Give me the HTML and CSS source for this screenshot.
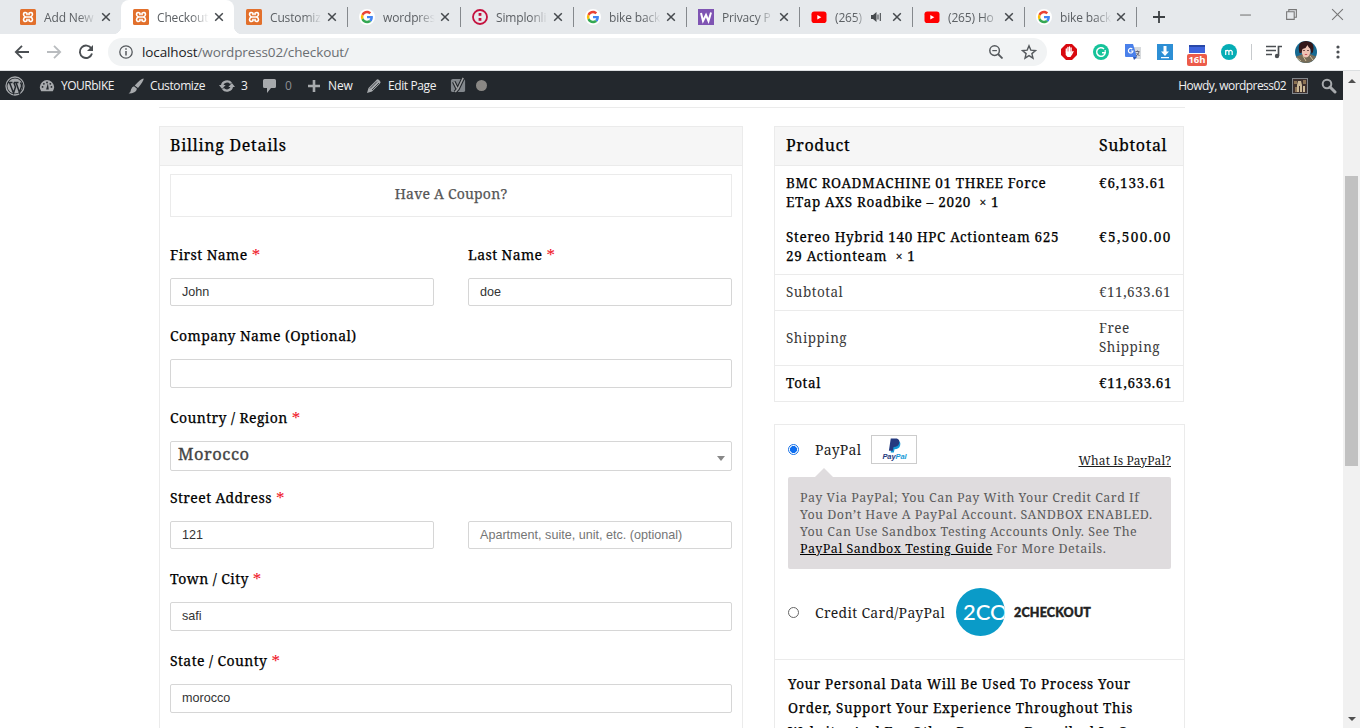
FILE: index.html
```
<!DOCTYPE html>
<html lang="en">
<head>
<meta charset="utf-8">
<title>Checkout</title>
<link rel="stylesheet" href="styles.css">
</head>
<body>
<svg class="defs" width="0" height="0">
  <symbol id="xampp" viewBox="0 0 16 16"><rect width="16" height="16" rx="1.5" fill="#e2702c"/><path d="M7 4.300C5.500 3 3.500 3.500 3.500 5.300q0 1.900 2 2.700-2 .8-2 2.700c0 1.800 2 2.300 3.500 1M9 4.300c1.500-1.300 3.500-.8 3.500 1q0 1.900-2 2.700 2 .8 2 2.700c0 1.800-2 2.300-3.500 1M5.500 8h5M7 3.800v2.500M9 3.800v2.500M7 9.700v2.500M9 9.700v2.500" fill="none" stroke="#fff" stroke-width="1.600"/></symbol>
  <symbol id="google" viewBox="0 0 48 48"><circle cx="24" cy="24" r="24" fill="#fff"/><g transform="translate(5.500 5.500) scale(.77)"><path fill="#ea4335" d="M24 9.500c3.540 0 6.710 1.220 9.210 3.600l6.850-6.850C35.900 2.380 30.470 0 24 0 14.620 0 6.510 5.380 2.560 13.220l7.980 6.190C12.430 13.720 17.740 9.500 24 9.500z"/><path fill="#4285f4" d="M46.980 24.550c0-1.570-.15-3.090-.38-4.550H24v9.020h12.940c-.58 2.960-2.260 5.480-4.780 7.180l7.730 6c4.510-4.180 7.090-10.360 7.090-17.650z"/><path fill="#fbbc05" d="M10.530 28.590a14.500 14.500 0 0 1 0-9.180l-7.980-6.190a24 24 0 0 0 0 21.560z"/><path fill="#34a853" d="M24 48c6.480 0 11.930-2.130 15.890-5.810l-7.730-6c-2.150 1.450-4.920 2.300-8.160 2.300-6.260 0-11.570-4.220-13.470-9.910l-7.980 6.190C6.510 42.620 14.620 48 24 48z"/></g></symbol>
  <symbol id="youtube" viewBox="0 0 16 16"><rect x=".5" y="2.500" width="15" height="11.500" rx="2.800" fill="#f00"/><path d="M6.300 6v4.600l4-2.300z" fill="#fff"/></symbol>
  <symbol id="close" viewBox="0 0 10 10"><path d="M1.200 1.200l7.600 7.600M8.800 1.200L1.200 8.800" stroke="#45494d" stroke-width="1.500"/></symbol>
</svg>

<header class="browser">
  <div class="tabs">
    <div class="tab"><svg class="fav"><use href="#xampp"/></svg><span class="title">Add New</span><svg class="x"><use href="#close"/></svg></div>
    <div class="tab active"><svg class="fav"><use href="#xampp"/></svg><span class="title">Checkout</span><svg class="x"><use href="#close"/></svg></div>
    <div class="tab sep"><svg class="fav"><use href="#xampp"/></svg><span class="title">Customiz</span><svg class="x"><use href="#close"/></svg></div>
    <div class="tab sep"><svg class="fav"><use href="#google"/></svg><span class="title">wordpres</span><svg class="x"><use href="#close"/></svg></div>
    <div class="tab sep"><svg class="fav" viewBox="0 0 16 16"><circle cx="8" cy="8" r="7" fill="none" stroke="#c5123f" stroke-width="1.800"/><rect x="6.600" y="4" width="2.800" height="2.800" fill="#c5123f"/><rect x="6.600" y="9" width="2.800" height="2.800" fill="#c5123f"/></svg><span class="title">Simplonli</span><svg class="x"><use href="#close"/></svg></div>
    <div class="tab sep"><svg class="fav"><use href="#google"/></svg><span class="title">bike back</span><svg class="x"><use href="#close"/></svg></div>
    <div class="tab sep"><svg class="fav" viewBox="0 0 16 16"><rect width="16" height="16" fill="#7f54b3"/><path d="M3 4l2 8 3-6 2.500 6L13 3.500" fill="none" stroke="#fff" stroke-width="2"/></svg><span class="title">Privacy P</span><svg class="x"><use href="#close"/></svg></div>
    <div class="tab sep"><svg class="fav"><use href="#youtube"/></svg><span class="title audio">(265)</span><svg class="sound" viewBox="0 0 12 12"><path d="M1 4h2l3.500-3v10L3 8H1z" fill="#45494d"/><path d="M8 3.500v5M10.300 2v8" stroke="#45494d" stroke-width="1.100"/></svg><svg class="x"><use href="#close"/></svg></div>
    <div class="tab sep narrow"><svg class="fav"><use href="#youtube"/></svg><span class="title">(265) Ho</span><svg class="x"><use href="#close"/></svg></div>
    <div class="tab sep narrow"><svg class="fav"><use href="#google"/></svg><span class="title">bike back</span><svg class="x"><use href="#close"/></svg></div>
    <svg class="plus" viewBox="0 0 12 12"><path d="M6 0v12M0 6h12" stroke="#3c4043" stroke-width="1.800"/></svg>
    <div class="window-buttons">
      <svg viewBox="0 0 12 12"><path d="M1 6.500h10" stroke="#777"/></svg>
      <svg viewBox="0 0 12 12"><path d="M1.500 3.500h7v7h-7zM3.500 3.500v-2h7v7h-2" fill="none" stroke="#777"/></svg>
      <svg viewBox="0 0 12 12"><path d="M1 1l10 10M11 1L1 11" stroke="#777"/></svg>
    </div>
  </div>
  <div class="toolbar">
    <svg class="nav" viewBox="0 0 16 16"><path d="M15 8H2M8 1.800L1.800 8 8 14.200" fill="none" stroke="#4b4f53" stroke-width="1.800"/></svg>
    <svg class="nav" viewBox="0 0 16 16"><path d="M1 8h13M8 1.800L14.200 8 8 14.200" fill="none" stroke="#b9bcbf" stroke-width="1.800"/></svg>
    <svg class="nav" viewBox="0 0 16 16"><path d="M13.400 4.600A6.200 6.200 0 1 0 14 9.500" fill="none" stroke="#4b4f53" stroke-width="1.900"/><path d="M15 1v6H9z" fill="#4b4f53"/></svg>
    <div class="omnibox">
      <svg class="info" viewBox="0 0 14 14"><circle cx="7" cy="7" r="6.200" fill="none" stroke="#55595d" stroke-width="1.300"/><path d="M7 6v4.500M7 3.300v1.500" stroke="#55595d" stroke-width="1.500"/></svg>
      <span class="url"><b>localhost</b>/wordpress02/checkout/</span>
      <svg class="mag" viewBox="0 0 14 14"><circle cx="5.600" cy="5.600" r="4.800" fill="none" stroke="#55595d" stroke-width="1.500"/><path d="M9 9l4.500 4.500" stroke="#55595d" stroke-width="1.800"/><path d="M3.300 5.600h4.600" stroke="#55595d" stroke-width="1.200"/></svg>
      <svg class="star" viewBox="0 0 16 16"><path d="M8 1.800l1.800 4.300 4.700.4-3.600 3.100 1.100 4.600L8 11.700l-4 2.500 1.100-4.600L1.500 6.500l4.700-.4z" fill="none" stroke="#55595d" stroke-width="1.400"/></svg>
    </div>
    <div class="extensions">
      <svg viewBox="0 0 16 16"><path d="M5 0h6l5 5v6l-5 5H5l-5-5V5z" fill="#d9090f"/><path d="M5.300 8V5M6.900 8V3.500M8.500 8V3M10.100 8V4M10.500 10.500l1.500-3" fill="none" stroke="#fff" stroke-width="1.300" stroke-linecap="round"/><path d="M4.700 7.500h6v3.500L9.500 13h-3l-1.800-2z" fill="#fff"/></svg>
      <svg viewBox="0 0 16 16"><circle cx="8" cy="8" r="8" fill="#15c39a"/><path d="M11 5a4.300 4.300 0 1 0 1.200 3.800H9" fill="none" stroke="#fff" stroke-width="1.500"/><path d="M12.200 6v3" stroke="#fff" stroke-width="1.200"/></svg>
      <svg viewBox="0 0 16 16"><path d="M6 3h10v12H9z" fill="#d7dadd"/><path d="M0 0h8l4 13H1q-1 0-1-1z" fill="#4a80ea"/><path d="M8 13h4l-3 3z" fill="#2d56b5"/><path d="M7.300 5A2.300 2.300 0 1 0 8 7H5.800" fill="none" stroke="#fff" stroke-width="1.200"/><path d="M10.500 7.500h4M12.500 6.500v1M14 8q-1 3-3 4M11.500 9l3 3" fill="none" stroke="#667" stroke-width="1"/></svg>
      <svg viewBox="0 0 16 16"><rect width="16" height="16" fill="#2d8fd5"/><path d="M6.500 2h3v5.500H12L8 12 4 7.500h2.500zM4 13h8v1.200H4z" fill="#fff"/></svg>
      <div class="timer"><i></i><span>16h</span></div>
      <svg viewBox="0 0 16 16"><circle cx="8" cy="8" r="8" fill="#05adb5"/><path d="M4.700 11V6M4.700 7.500q1.600-2.200 3.200 0V11M7.900 7.500q1.700-2.200 3.300 0V11" fill="none" stroke="#fff" stroke-width="1.200"/></svg>
      <i class="divider"></i>
      <svg viewBox="0 0 16 16"><path d="M0 2.500h10M0 6.500h10M0 10.500h6M12.500 12V2.500H16" fill="none" stroke="#4b4f53" stroke-width="1.700"/><circle cx="11" cy="12" r="2.200" fill="#4b4f53"/></svg>
      <svg class="avatar" viewBox="0 0 22 22"><clipPath id="face"><circle cx="11" cy="11" r="11"/></clipPath><g clip-path="url(#face)"><rect width="22" height="22" fill="#176a92"/><path d="M0 16l8-3h7l7 3v6H0z" fill="#776c58"/><path d="M2 17l4 3M8 15l3 5M15 15l3 4" stroke="#d4c29c"/><ellipse cx="11" cy="10" rx="4.500" ry="6.500" fill="#efc3b4"/><path d="M4.500 12Q1.500 0 11 0t7 11l-1.500 2-1-5-2-2-1-2-2 3-3 1-1 4z" fill="#33171a"/><path d="M8 9.500h2M12 9.500h2" stroke="#533" stroke-width=".8"/><path d="M9.800 13.500h2.400" stroke="#c54d58" stroke-width=".9"/></g></svg>
      <svg class="dots" viewBox="0 0 4 16"><circle cx="2" cy="3" r="1.600" fill="#4b4f53"/><circle cx="2" cy="8" r="1.600" fill="#4b4f53"/><circle cx="2" cy="13" r="1.600" fill="#4b4f53"/></svg>
    </div>
  </div>
</header>

<div class="viewport">
<main class="page">
  <nav class="adminbar">
    <svg class="wp" viewBox="0 0 20 20"><circle cx="10" cy="10" r="9" fill="none" stroke="#a7aaad" stroke-width="1.300"/><circle cx="10" cy="10" r="7.600" fill="#a7aaad"/><path d="M3 6.500h4.500M9 6.500h4.500M4.500 6.500l4 10.500 2-6-1.700-4.500M11 6.500l3.500 10 2-6q.5-2-1-4" fill="none" stroke="#23282d" stroke-width="1.500"/></svg>
    <span class="item site"><svg viewBox="0 0 18 16"><path d="M2.500 14A8 8 0 1 1 15.500 14z" fill="#a7aaad"/><path d="M8 12l2-7 1 7z" fill="#23282d"/><g fill="#23282d"><circle cx="4" cy="9" r="1"/><circle cx="5.500" cy="5.500" r="1"/><circle cx="9" cy="4" r="1"/><circle cx="12.700" cy="5.500" r="1"/><circle cx="14" cy="9" r="1"/></g></svg>YOURbIKE</span>
    <span class="item customize"><svg viewBox="0 0 16 16"><path d="M15.500.5Q16.500 2 10 10L6.700 7.500Q13 .5 15.500.5zM6 8.300l3 2.500Q8 15.500.5 15.500 3 14 3 11.500q1-2.700 3-3.200z" fill="#a7aaad"/></svg>Customize</span>
    <span class="item updates"><svg viewBox="0 0 18 16"><path d="M3.500 7.500A5.500 5 0 0 1 13.500 5M14.500 8.500A5.500 5 0 0 1 4.500 11" fill="none" stroke="#a7aaad" stroke-width="2.700"/><path d="M0 7h7.500L3.500 11.500zM18 9h-7.500l4-4.500z" fill="#a7aaad"/></svg>3</span>
    <span class="item comments"><svg viewBox="0 0 16 16"><path d="M2.500 1h10q1.500 0 1.500 1.500v6q0 1.500-1.500 1.500H9l-4 5v-5H2.500Q1 10 1 8.500v-6Q1 1 2.500 1z" fill="#a7aaad"/></svg>0</span>
    <span class="item new"><svg viewBox="0 0 14 14"><path d="M7 1v12M1 7h12" stroke="#a7aaad" stroke-width="2.600"/></svg>New</span>
    <span class="item edit"><svg viewBox="0 0 16 16"><path d="M1 15l1.500-5L10 2.500q1.500-2 3-.5l1 1q1.500 1.500-.5 3L6 13.500z" fill="#a7aaad"/><path d="M4 10.500l7-7M6 12l7-7" stroke="#23282d" stroke-width=".8"/></svg>Edit Page</span>
    <svg class="yoast" viewBox="0 0 18 18"><rect x="1" y="2" width="15" height="14" rx="2" fill="#82878c"/><path d="M4 5l3.500 7M14 1L8.500 12.500 5.500 16" fill="none" stroke="#23282d" stroke-width="4"/><path d="M4 5l3.500 7M14 1L8.500 12.500 5.500 16" fill="none" stroke="#a0a2a4" stroke-width="1.600"/></svg>
    <i class="seo-dot"></i>
    <span class="howdy">Howdy, wordpress02</span>
    <svg class="thumb" viewBox="0 0 16 16"><rect width="16" height="16" fill="#82878c"/><rect x="1" y="1" width="14" height="14" fill="#3d302d"/><path d="M2 3h3v3H2zM11 2h3v4h-3zM3 9h2v5H3z" fill="#8d7354"/><path d="M6 3h3l1 4v7H8V8H7v6H5V7zM11 8h2v6h-2z" fill="#cbb896"/></svg>
    <svg class="find" viewBox="0 0 16 16"><circle cx="6" cy="6" r="4.300" fill="none" stroke="#a7aaad" stroke-width="2"/><path d="M9 9l5 5" stroke="#a7aaad" stroke-width="3" stroke-linecap="round"/></svg>
  </nav>

  <div class="content">
    <section class="billing">
      <h3 class="bar">Billing Details</h3>
      <div class="coupon">Have A Coupon?</div>
      <form class="fields">
        <div class="pair">
          <label class="field">First Name <em>*</em><span class="input">John</span></label>
          <label class="field">Last Name <em>*</em><span class="input">doe</span></label>
        </div>
        <label class="field">Company Name (Optional)<span class="input tall"></span></label>
        <label class="field country">Country / Region <em>*</em><span class="input select">Morocco<i></i></span></label>
        <div class="pair">
          <label class="field">Street Address <em>*</em><span class="input">121</span></label>
          <label class="field"><span class="input placeholder">Apartment, suite, unit, etc. (optional)</span></label>
        </div>
        <label class="field">Town / City <em>*</em><span class="input tall">safi</span></label>
        <label class="field">State / County <em>*</em><span class="input tall">morocco</span></label>
      </form>
    </section>

    <aside class="order">
      <div class="summary">
        <div class="row bar"><span>Product</span><span class="sub">Subtotal</span></div>
        <div class="row product"><span>BMC ROADMACHINE 01 THREE Force<br><span class="line2">ETap AXS Roadbike – 2020 &nbsp;<small>×</small> 1</span></span><span class="price">€6,133.61</span></div>
        <div class="row product last"><span>Stereo Hybrid 140 HPC Actionteam 625<br><span class="line2">29 Actionteam &nbsp;<small>×</small> 1</span></span><span class="price wide">€5,500.00</span></div>
        <div class="row light"><span>Subtotal</span><span>€11,633.61</span></div>
        <div class="row light shipping"><span>Shipping</span><span>Free<br>Shipping</span></div>
        <div class="row total"><span>Total</span><span>€11,633.61</span></div>
      </div>
      <div class="payment">
        <div class="methods">
          <div class="method paypal">
            <i class="radio on"></i><span>PayPal</span>
            <span class="pp-mark"><svg viewBox="0 0 16 16"><path d="M5 3h7q3 1 2 5t-6 4l-.7 3.500H4z" fill="#179bd7"/><path d="M4 .5h6.500Q14 1.500 13 5.500T7 9.500L6.200 13.500H2z" fill="#253b80"/></svg><b>Pay<span>Pal</span></b></span>
            <a class="what">What Is PayPal?</a>
          </div>
          <div class="note">Pay Via PayPal; You Can Pay With Your Credit Card If<br>You Don’t Have A PayPal Account. SANDBOX ENABLED.<br>You Can Use Sandbox Testing Accounts Only. See The<br><a>PayPal Sandbox Testing Guide</a> For More Details.</div>
          <div class="method card">
            <i class="radio"></i><span>Credit Card/PayPal</span>
            <span class="disc">2CO</span><b class="checkout-mark">2CHECKOUT</b>
          </div>
        </div>
        <p class="privacy">Your Personal Data Will Be Used To Process Your<br>Order, Support Your Experience Throughout This<br>Website, And For Other Purposes Described In Our</p>
      </div>
    </aside>
  </div>
</main>
<div class="scrollbar"><i class="up"></i><i class="thumb-bar"></i><i class="down"></i></div>
</div>
</body>
</html>
```
FILE: styles.css
```
* { box-sizing: border-box; }
body {
  margin: 0;
  height: 728px;
  overflow: hidden;
  display: flex;
  flex-direction: column;
  background: #fff;
  font-family: "Noto Serif", "DejaVu Serif Condensed", serif;
  color: #000;
}
svg { flex: none; display: block; }
.defs { position: absolute; }
em { font-style: normal; color: #f0202c; }

/* Browser chrome */
.browser { height: 71px; flex: none; border-bottom: 1px solid #dcdfe1; font-family: "Open Sans", "Noto Sans", sans-serif; }
.tabs { height: 34px; display: flex; align-items: center; padding-left: 8px; background: #e6e9ec; }
.tab { position: relative; width: 113px; height: 34px; flex: none; display: flex; align-items: center; padding-left: 12px; font-size: 12px; letter-spacing: -.15px; color: #5c6064; }
.tab.narrow { width: 112px; }
.tab.sep::after { content: ""; position: absolute; right: -1px; top: 7px; width: 1px; height: 20px; background: #85898d; }
.tab.active { background: #fff; border-radius: 8px 8px 0 0; }
.tab.active::before, .tab.active::after { content: ""; position: absolute; bottom: 0; width: 8px; height: 8px; }
.tab.active::before { left: -8px; background: radial-gradient(circle at 0 0, transparent 8px, #fff 8.500px); }
.tab.active::after { right: -8px; background: radial-gradient(circle at 100% 0, transparent 8px, #fff 8.500px); }
.fav { width: 16px; height: 16px; margin-right: 8px; }
.title { width: 53px; white-space: nowrap; -webkit-mask-image: linear-gradient(90deg, #000 65%, transparent 98%); mask-image: linear-gradient(90deg, #000 65%, transparent 98%); }
.title.audio { width: 30px; margin-right: 5px; -webkit-mask-image: linear-gradient(90deg, #000 65%, rgba(0, 0, 0, .2)); mask-image: linear-gradient(90deg, #000 65%, rgba(0, 0, 0, .2)); }
.sound { width: 12px; height: 12px; margin-right: 6px; }
.x { width: 10px; height: 10px; margin-left: 4px; }
.narrow .x { margin-left: 3px; }
.plus { width: 12px; height: 12px; margin-left: 17px; }
.window-buttons { margin: 0 16px 6px auto; display: flex; gap: 33px; }
.window-buttons svg { width: 13px; height: 13px; }

.toolbar { height: 36px; display: flex; align-items: center; padding-left: 14px; }
.nav { width: 16px; height: 16px; margin-right: 16px; }
.omnibox { width: 939px; height: 28px; margin-left: -2px; border-radius: 14px; background: #f1f3f4; display: flex; align-items: center; padding: 0 10px 0 11px; }
.info { width: 14px; height: 14px; margin-right: 9px; }
.url { flex: 1; font-size: 13.500px; letter-spacing: -.12px; color: #6a6e72; }
.url b { font-weight: 400; color: #202124; }
.mag { width: 14px; height: 14px; margin-right: 18px; }
.star { width: 16px; height: 16px; }
.extensions { display: flex; align-items: center; margin-left: 14px; }
.extensions svg { width: 16px; height: 16px; margin-right: 16px; }
.timer { width: 20px; margin: 6px 14px 0 -2px; display: flex; flex-direction: column; align-items: center; }
.timer i { width: 16px; height: 8px; margin-bottom: 1px; background: linear-gradient(#2848a8 20%, #3e63dc 20%); }
.timer span { width: 20px; height: 12px; line-height: 12px; background: #ec5b4a; border-radius: 2px; color: #fff; font-size: 9.500px; font-weight: 700; text-align: center; }
.divider { width: 1px; height: 16px; background: #c7cacd; margin: 0 14px 0 -2px; }
.extensions .avatar { width: 22px; height: 22px; margin-right: 19px; margin-left: -3px; }
.extensions .dots { width: 4px; margin: 0; }

/* Page area */
.viewport { flex: 1; min-height: 0; display: flex; }
.page { width: 1343px; overflow: hidden; }
.adminbar { height: 29px; display: flex; align-items: center; background: #23282d; color: #f0f0f1; font: 12px "Open Sans", "Noto Sans", sans-serif; letter-spacing: -.4px; padding-left: 5px; }
.wp { width: 20px; height: 20px; margin-right: 14px; }
.item { display: flex; align-items: center; gap: 6px; white-space: nowrap; }
.item svg { width: 16px; height: 16px; }
.item.site { width: 89px; letter-spacing: -.5px; }
.item.customize { width: 91px; }
.item.updates { width: 43px; }
.item.comments { width: 45px; gap: 7px; color: #8b8f93; }
.item.new { width: 59px; letter-spacing: -.1px; gap: 7px; }
.item.new svg { width: 14px; height: 14px; }
.item.edit { width: 84px; letter-spacing: -.4px; }
.yoast { width: 17px; height: 17px; }
.seo-dot { width: 11px; height: 11px; border-radius: 50%; background: #8a8885; margin-left: 9px; }
.howdy { margin-left: auto; margin-right: 6px; letter-spacing: -.56px; }
.thumb { width: 16px; height: 16px; margin-right: 13px; }
.find { width: 16px; height: 16px; margin-right: 6px; }

.content { display: flex; justify-content: space-between; align-items: flex-start; width: 1026px; margin: 7px 0 0 159px; border-top: 1px solid #ebebeb; padding-top: 18px; }
.bar, .coupon, .field, .row, .privacy { -webkit-text-stroke: .25px currentColor; }
.bar { height: 40px; margin: 0; background: #f6f6f6; border-bottom: 1px solid #ebebeb; font-size: 16px; font-weight: 400; line-height: 38px; letter-spacing: .72px; }
.billing { width: 584px; height: 640px; border: 1px solid #ebebeb; }
.billing .bar { padding-left: 10px; height: 39px; line-height: 37px; }
.coupon { height: 43px; margin: 8px 10px 0; border: 1px solid #ebebeb; line-height: 38px; text-align: center; font-size: 14px; letter-spacing: .2px; color: #555; }
.fields { display: flex; flex-direction: column; gap: 18px; padding: 26px 10px 0; }
.pair { display: grid; grid-template-columns: 264px 264px; justify-content: space-between; align-items: end; }
.field { display: block; font-size: 14px; line-height: 24px; letter-spacing: .41px; white-space: nowrap; }
.field em { font-size: 17px; line-height: 0; position: relative; top: 2px; -webkit-text-stroke: 0; }
.field.country { margin-bottom: -3px; }
.input { display: block; height: 28px; margin-top: 11px; border: 1px solid #d6d6d6; border-radius: 2px; padding-left: 11px; line-height: 26px; font-family: "Liberation Sans", Arial, sans-serif; font-size: 12.600px; letter-spacing: 0; color: #333; -webkit-text-stroke: 0; }
.input.tall { height: 29px; line-height: 27px; }
.input.placeholder { color: #757575; }
.input.select { height: 30px; line-height: 24px; padding: 0 6px 0 7px; display: flex; justify-content: space-between; align-items: flex-start; font-family: "Noto Serif", "DejaVu Serif Condensed", serif; font-size: 16.500px; letter-spacing: .5px; color: #444; -webkit-text-stroke: .35px currentColor; }
.select i { margin-top: 14px; border: 4px solid transparent; border-top: 5px solid #888; border-bottom: 0; }

.order { width: 411px; }
.summary { width: 410px; border: 1px solid #ebebeb; font-size: 13.500px; line-height: 19px; letter-spacing: .64px; }
.row { display: grid; grid-template-columns: 313px 1fr; padding-left: 11px; white-space: nowrap; }
.row.bar { height: 39px; line-height: 37px; font-size: 16px; letter-spacing: .62px; }
.row.product { padding-top: 8px; height: 54px; }
.row.product.last { height: 55px; border-bottom: 1px solid #ebebeb; }
.line2 { letter-spacing: .68px; }
.line2 small { font-size: 12px; }
.price { letter-spacing: .85px; }
.price.wide { letter-spacing: 1.450px; }
.row.light { height: 36px; padding-top: 8px; color: #3a3a3a; border-bottom: 1px solid #ebebeb; letter-spacing: .5px; -webkit-text-stroke: 0; }
.row.light.shipping { height: 55px; align-items: center; padding-top: 0; }
.row.total { height: 35px; padding-top: 8px; letter-spacing: .6px; }

.payment { height: 340px; margin-top: 22px; border: 1px solid #ebebeb; }
.methods { height: 235px; padding: 0 13px; border-bottom: 1px solid #ebebeb; }
.method { display: flex; align-items: center; font-size: 14px; letter-spacing: .3px; color: #1c1c1c; }
.method.paypal { height: 52px; padding-bottom: 3px; }
.radio { width: 11px; height: 11px; border: 1px solid #666; border-radius: 50%; margin-right: 16px; }
.radio.on { border-color: #1a73e8; background: radial-gradient(circle, #0f6ff0 3.200px, #fff 3.800px); }
.pp-mark { width: 46px; height: 29px; margin-left: 10px; border: 1px solid #ccc; display: flex; flex-direction: column; align-items: center; padding-top: 2px; }
.pp-mark svg { width: 15px; height: 15px; }
.pp-mark b { font: italic 700 7.500px/8px "Liberation Sans", Arial, sans-serif; letter-spacing: -.1px; color: #253b80; }
.pp-mark b span { color: #179bd7; }
.what { margin: 22px 0 0 auto; font-size: 12px; letter-spacing: .09px; text-decoration: underline; }
.note { position: relative; height: 92px; padding: 12px; background: #dfdcde; border-radius: 2px; font-size: 12.500px; line-height: 17px; letter-spacing: .48px; color: #5a5a5a; white-space: nowrap; }
.note::before { content: ""; position: absolute; left: 27px; top: -9px; border: 9px solid transparent; border-top: 0; border-bottom-color: #dfdcde; }
.note a { color: #000; text-decoration: underline; }
.method.card { height: 86px; }
.disc { width: 49px; height: 48px; margin-left: 11px; border-radius: 50%; background: #0a9bc8; overflow: hidden; padding-left: 7px; color: #fff; font: 500 22px/47px Lato, sans-serif; letter-spacing: -.1px; white-space: nowrap; }
.checkout-mark { margin-left: 9px; font: 900 12.500px Lato, sans-serif; letter-spacing: .15px; color: #222; -webkit-text-stroke: .4px #222; }
.privacy { margin: 0; padding: 12px 13px; font-size: 13.500px; line-height: 24px; letter-spacing: .65px; white-space: nowrap; }

.scrollbar { width: 17px; background: #f1f1f1; position: relative; display: flex; flex-direction: column; align-items: center; }
.scrollbar .up { margin-top: 8px; border: 4px solid transparent; border-top: 0; border-bottom: 4px solid #505050; }
.scrollbar .thumb-bar { width: 13px; height: 290px; margin-top: 93px; background: #c1c1c1; }
.scrollbar .down { margin: auto 0 7px; border: 4px solid transparent; border-bottom: 0; border-top: 4px solid #505050; }
```
